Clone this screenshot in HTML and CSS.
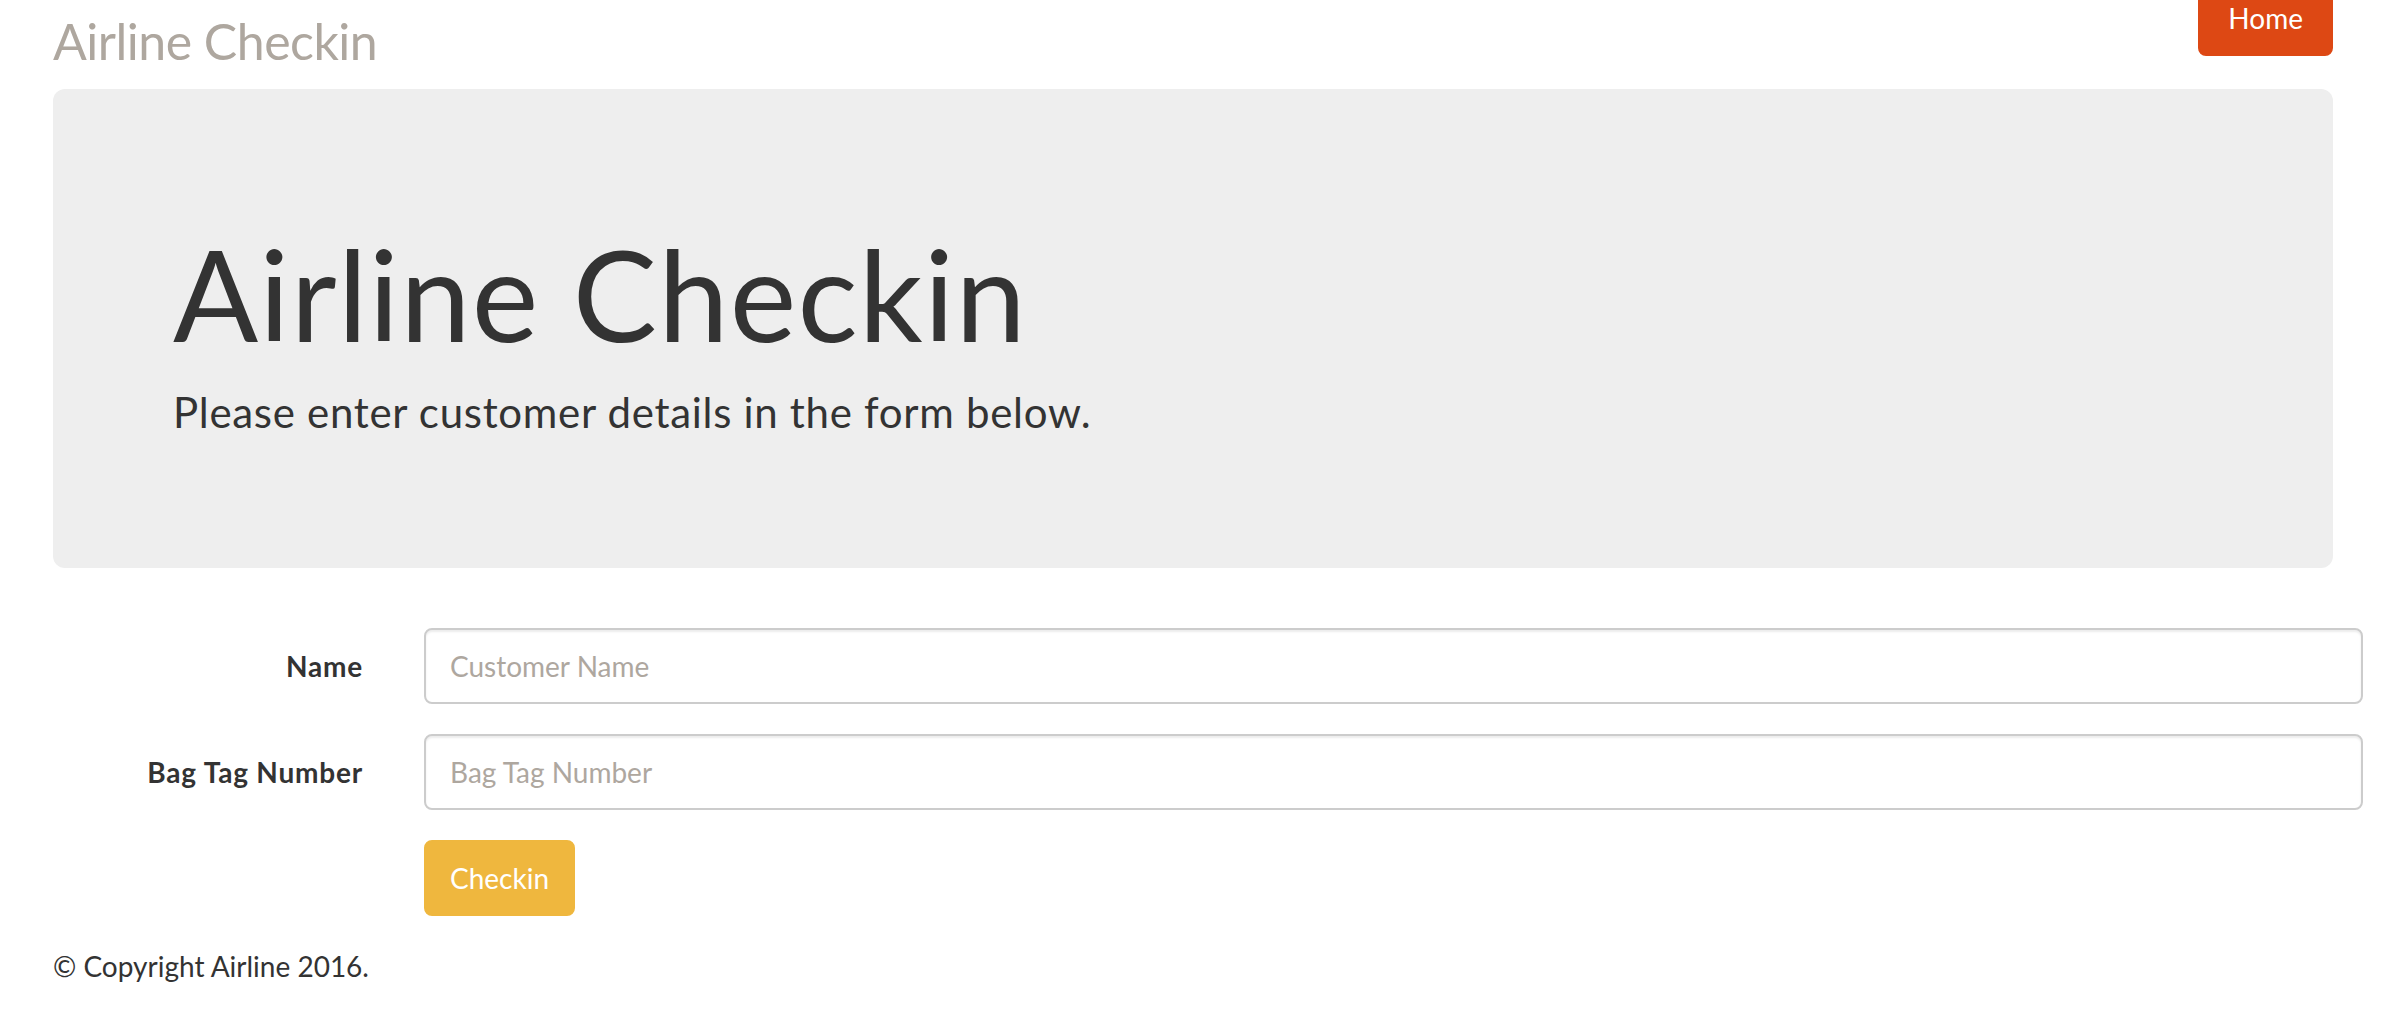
FILE: index.html
```html
<!DOCTYPE html>
<html lang="en">
<head>
<meta charset="utf-8">
<title>Airline Checkin</title>
<link rel="stylesheet" href="styles.css">
</head>
<body>
<div class="page">
  <header class="topbar">
    <div class="brand">Airline Checkin</div>
    <a class="btn btn-home" href="#">Home</a>
  </header>
  <section class="jumbotron">
    <h1>Airline Checkin</h1>
    <p>Please enter customer details in the form below.</p>
  </section>
</div>
<form class="checkin-form">
  <label class="form-label" for="name">Name</label>
  <input class="form-input" id="name" type="text" placeholder="Customer Name">
  <label class="form-label" for="bag">Bag Tag Number</label>
  <input class="form-input" id="bag" type="text" placeholder="Bag Tag Number">
  <span class="form-spacer"></span>
  <div class="form-actions"><button class="btn btn-checkin" type="button">Checkin</button></div>
</form>
<footer class="footer">© Copyright Airline 2016.</footer>
</body>
</html>
```

FILE: styles.css
```css
html, body {
  margin: 0;
  padding: 0;
  background: #fff;
}
body {
  font-family: Lato, "Open Sans", "Liberation Sans", sans-serif;
  color: #333;
  font-size: 28px;
  line-height: 40px;
  overflow: hidden;
}
.page {
  margin-left: 53px;
  width: 2280px;
}
.topbar {
  height: 89px;
  display: flex;
  justify-content: space-between;
  align-items: flex-start;
}
.brand {
  font-size: 50px;
  line-height: 60px;
  padding-top: 11px;
  letter-spacing: -0.5px;
  color: #aea79f;
}
.btn {
  display: inline-block;
  font-family: inherit;
  font-size: 28px;
  line-height: 40px;
  padding: 16px 24px;
  border: 2px solid transparent;
  border-radius: 8px;
  color: #fff;
  text-decoration: none;
  cursor: pointer;
}
.btn-home {
  margin-top: -20px;
  padding: 16px 28px;
  background: #dd4814;
  border-color: #dd4814;
}
.jumbotron {
  background: #eeeeee;
  border-radius: 12px;
  padding: 96px 120px;
  margin-bottom: 60px;
}
.jumbotron h1 {
  margin: 40px 0 18px;
  font-size: 126px;
  line-height: 1.1;
  font-weight: 400;
  letter-spacing: 1.2px;
  color: #333;
}
.jumbotron p {
  margin: 0 0 30px;
  font-size: 42px;
  line-height: 60px;
  letter-spacing: 0.7px;
}
.checkin-form {
  display: grid;
  grid-template-columns: 363px 1fr;
  column-gap: 61px;
  row-gap: 30px;
  margin-right: 33px;
  margin-bottom: 30px;
}
.form-label {
  align-self: center;
  text-align: right;
  font-weight: 700;
  font-size: 28px;
  letter-spacing: 0.8px;
}
.form-input {
  box-sizing: border-box;
  height: 76px;
  width: 100%;
  font-family: inherit;
  font-size: 28px;
  line-height: 40px;
  padding: 16px 24px;
  border: 2px solid #cccccc;
  border-radius: 8px;
  box-shadow: inset 0 2px 2px rgba(0, 0, 0, 0.075);
  color: #333;
  background: #fff;
  outline: none;
}
.form-input::placeholder {
  color: #aea79f;
  opacity: 1;
}
.form-actions {
  display: flex;
}
.btn-checkin {
  background: #efb73e;
  border-color: #efb73e;
}
.footer {
  margin-left: 53px;
  font-size: 28px;
  line-height: 40px;
}
```
